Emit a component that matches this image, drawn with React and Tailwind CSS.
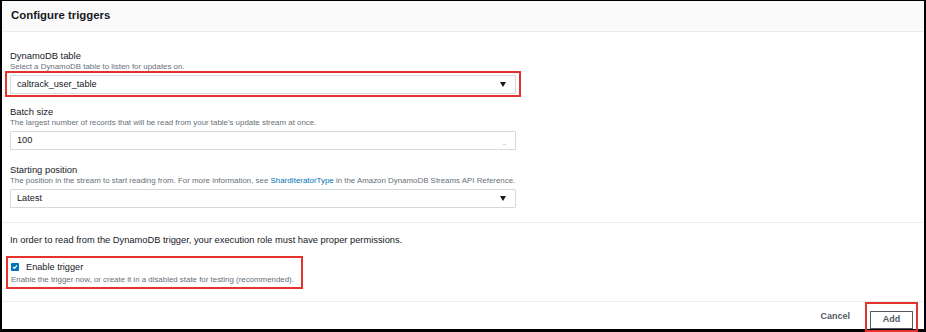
import React from "react";

const font = { fontFamily: '"Liberation Sans", Arial, sans-serif' };

const Caret = () => (
  <svg width="6" height="5" viewBox="0 0 6 5" className="shrink-0">
    <path d="M0 0h6L3 5z" fill="#16191f" />
  </svg>
);

const Field = ({ label, desc, children, className = "" }) => (
  <div className={className}>
    <div className="text-[9.4px] leading-[12px] text-[#16191f]">{label}</div>
    <div className="text-[7.9px] leading-[10px] text-[#687078]">{desc}</div>
    {children}
  </div>
);

const Box = ({ value, select }) => (
  <div className="flex h-[19px] w-[506px] items-center justify-between rounded-[1px] border border-[#d5dbdb] bg-white pl-[6px] pr-[9px] text-[9.2px] text-[#16191f]">
    <span>{value}</span>
    {select ? <Caret /> : <span className="mt-[8px] h-px w-[3px] bg-[#d5dbdb]" />}
  </div>
);

export default function App() {
  return (
    <div
      style={font}
      className="box-border flex h-[332px] w-[926px] flex-col border-x-[2px] border-t border-b-[3px] border-black bg-white"
    >
      {/* Header */}
      <div className="flex h-[31px] shrink-0 items-center border-b border-[#eaeded] bg-[#fafafa] pl-[9px]">
        <h2 className="text-[11.4px] font-bold text-[#16191f]">Configure triggers</h2>
      </div>

      {/* Form */}
      <div className="border-b border-[#eaeded] pl-[8px] pb-[14px]">
        <Field
          className="mt-[18px]"
          label="DynamoDB table"
          desc="Select a DynamoDB table to listen for updates on."
        >
          <div className="-ml-[5px] mt-[-1px] w-fit border-2 border-[#e5322d] px-[3px] pt-[2px] pb-px">
            <Box value="caltrack_user_table" select />
          </div>
        </Field>

        <Field
          className="mt-[9px]"
          label="Batch size"
          desc="The largest number of records that will be read from your table's update stream at once."
        >
          <div className="mt-[3px]">
            <Box value="100" />
          </div>
        </Field>

        <Field
          className="mt-[14px]"
          label="Starting position"
          desc={
            <>
              The position in the stream to start reading from. For more information, see{" "}
              <span className="text-[#0073bb]">ShardIteratorType</span> in the Amazon DynamoDB
              Streams API Reference.
            </>
          }
        >
          <div className="mt-[3px]">
            <Box value="Latest" select />
          </div>
        </Field>
      </div>

      {/* Permissions + enable */}
      <div className="border-b border-[#eaeded] pl-[8px] pb-[12px]">
        <p className="mt-[11px] text-[9.3px] leading-[12px] text-[#16191f]">
          In order to read from the DynamoDB trigger, your execution role must have proper permissions.
        </p>
        <div className="-ml-[4px] mt-[10px] w-[297px] border-2 border-[#e5322d] pl-[3px] pt-[3px] pb-[2px]">
          <label className="flex items-center gap-[7px] text-[9.2px] leading-[12px] text-[#16191f]">
            <span className="flex h-[8px] w-[8px] items-center justify-center rounded-[1px] bg-[#0073bb]">
              <svg width="6" height="6" viewBox="0 0 6 6">
                <path d="M1 3l1.4 1.4L5 1.4" fill="none" stroke="#fff" strokeWidth="1.2" />
              </svg>
            </span>
            Enable trigger
          </label>
          <div className="mt-[2px] text-[7.9px] leading-[10px] text-[#687078]">
            Enable the trigger now, or create it in a disabled state for testing (recommended).
          </div>
        </div>
      </div>

      {/* Footer */}
      <div className="flex flex-1 items-center justify-end gap-[15px] pr-[6px]">
        <span className="text-[9px] font-bold text-[#545b64]">Cancel</span>
        <div className="border-2 border-[#e5322d] px-[3px] py-px">
          <button className="h-[18px] w-[43px] border border-[#545b64] bg-white text-[9px] font-bold text-[#545b64]">
            Add
          </button>
        </div>
      </div>
    </div>
  );
}
